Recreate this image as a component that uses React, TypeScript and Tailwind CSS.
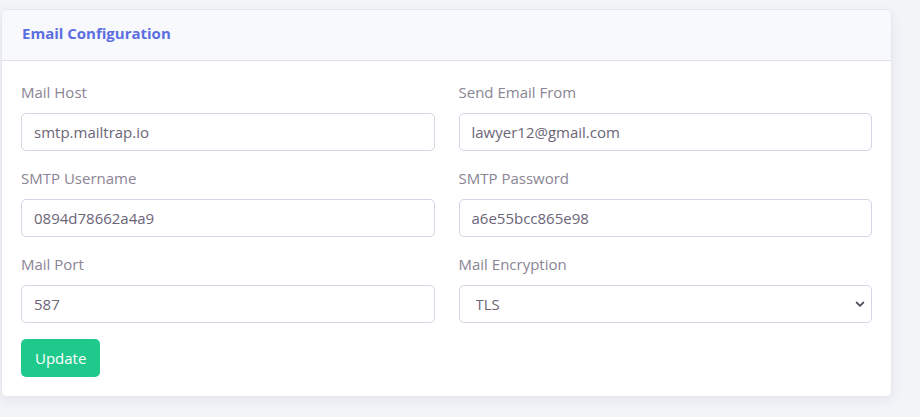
const fields = [
  { label: "Mail Host", value: "smtp.mailtrap.io" },
  { label: "Send Email From", value: "lawyer12@gmail.com" },
  { label: "SMTP Username", value: "0894d78662a4a9" },
  { label: "SMTP Password", value: "a6e55bcc865e98" },
  { label: "Mail Port", value: "587" },
];

const Field = ({ label, children }: { label: string; children: React.ReactNode }) => (
  <div className="flex flex-col">
    <label className="text-[15px] leading-[22px] text-[#8a8494] mb-[10px]">{label}</label>
    {children}
  </div>
);

export default function App() {
  return (
    <div className="min-h-screen bg-[#f3f4f8] pt-[9px] pl-px font-['Open_Sans',sans-serif]">
      <div className="w-[891px] bg-white rounded-[5px] border border-[#e6e6f0] shadow-[0_4px_14px_rgba(40,40,90,0.06)] overflow-hidden">
        <div className="h-[51px] bg-[#f8f9fc] border-b border-[#e1e1ee] flex items-center px-[20px] pb-[4px]">
          <h2 className="text-[15px] font-bold text-[#5b6ee1]">Email Configuration</h2>
        </div>
        <div className="px-[19px] pt-[20px] pb-[19px]">
          <div className="grid grid-cols-2 gap-x-[24px] gap-y-[16px]">
            {fields.map((f) => (
              <Field key={f.label} label={f.label}>
                <input
                  readOnly
                  value={f.value}
                  className="h-[38px] w-full rounded-[5px] border border-[#d6d3e3] px-[12px] text-[15px] text-[#6b6577] outline-none"
                />
              </Field>
            ))}
            <Field label="Mail Encryption">
              <div className="relative">
                <select
                  defaultValue="tls"
                  className="h-[38px] w-full appearance-none rounded-[5px] border border-[#d6d3e3] bg-white px-[16px] text-[15px] text-[#6b6577] outline-none"
                >
                  <option value="tls">TLS</option>
                  <option value="ssl">SSL</option>
                </select>
                <svg
                  className="absolute right-[6px] top-1/2 -translate-y-1/2 pointer-events-none"
                  width="12"
                  height="12"
                  viewBox="0 0 16 16"
                  fill="none"
                  stroke="#555462"
                  strokeWidth="2.4"
                  strokeLinecap="round"
                  strokeLinejoin="round"
                >
                  <path d="M3.5 6l4.5 4.5L12.5 6" />
                </svg>
              </div>
            </Field>
          </div>
          <button className="mt-[16px] h-[38px] px-[14px] rounded-[5px] bg-[#1fc98b] text-white text-[15px]">
            Update
          </button>
        </div>
      </div>
    </div>
  );
}
